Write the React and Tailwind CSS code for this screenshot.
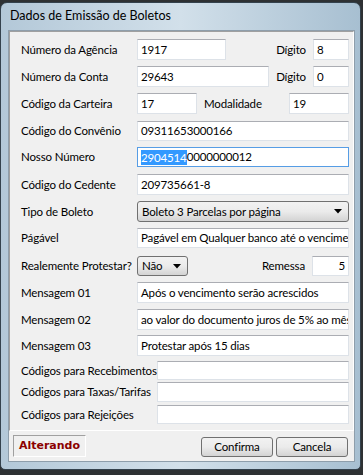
import React from "react";

const FONT = { fontFamily: 'Lato, "Noto Sans", sans-serif' };

const inputClass =
  "h-full bg-white border border-[#dde2e8] border-t-[#abadb3] pl-[3px] pr-[3px] flex items-center text-[11.5px] tracking-[-0.15px] text-black overflow-hidden whitespace-nowrap";

const comboClass =
  "h-full rounded-[3px] border border-[#707070] bg-gradient-to-b from-[#f2f2f2] via-[#ebebeb] to-[#d3d3d3] flex items-center pl-[4px] pr-[6px] text-[11.5px] tracking-[-0.15px] text-black";

function Arrow() {
  return (
    <svg width="8" height="5" viewBox="0 0 8 5" className="ml-auto shrink-0">
      <path d="M0 0 L8 0 L4 4.5 Z" fill="#000" />
    </svg>
  );
}

function Label({ children, w = "w-[116px]" }) {
  return <div className={`${w} shrink-0 text-[11.5px] tracking-[-0.15px] text-black whitespace-nowrap`}>{children}</div>;
}

function Field({ w = "w-[212px]", children, extra = "" }) {
  return <div className={`${inputClass} ${w} ${extra}`}>{children}</div>;
}

const btnClass =
  "mt-[2px] w-[72px] h-[20px] rounded-[3px] border border-[#707070] bg-gradient-to-b from-[#f2f2f2] via-[#ebebeb] to-[#d3d3d3] text-[11.5px] tracking-[-0.15px] text-black";

export default function App() {
  return (
    <div className="w-[363px] h-[475px] bg-[#2e3133] pt-[2px] overflow-hidden" style={FONT}>
      <div className="w-[361px] h-[468px] rounded-t-[7px] rounded-b-[5px] border border-[#34424d] bg-gradient-to-r from-[#b3c8d8] via-[#d2e0ea] to-[#a7bfd1] flex flex-col">
        <div className="h-[27px] pl-[9px] flex items-center text-[12.5px] text-black">
          Dados de Emissão de Boletos
        </div>
        <div className="ml-[7px] w-[347px] flex-1 mb-[7px] border border-[#8e9eab] bg-[#f0f0f0] flex flex-col">
          <div className="h-[400px] border border-t-[#a0a0a0] border-l-[#a0a0a0] border-r-white border-b-white flex flex-col pl-[11px] pr-[4px]">
            <div className="mt-[7px] h-[21px] flex items-center">
              <Label>Número da Agência</Label>
              <Field w="w-[89px]">1917</Field>
              <div className="ml-auto mr-[7px] text-[11.5px] tracking-[-0.15px]">Dígito</div>
              <Field w="w-[36px]">8</Field>
            </div>
            <div className="mt-[6px] h-[21px] flex items-center">
              <Label>Número da Conta</Label>
              <Field w="w-[132px]">29643</Field>
              <div className="ml-auto mr-[7px] text-[11.5px] tracking-[-0.15px]">Dígito</div>
              <Field w="w-[36px]">0</Field>
            </div>
            <div className="mt-[6px] h-[21px] flex items-center">
              <Label>Código da Carteira</Label>
              <Field w="w-[60px]">17</Field>
              <div className="ml-[7px] text-[11.5px] tracking-[-0.15px]">Modalidade</div>
              <Field w="w-[60px]" extra="ml-auto">19</Field>
            </div>
            <div className="mt-[7px] h-[20px] flex items-center">
              <Label>Código do Convênio</Label>
              <Field>09311653000166</Field>
            </div>
            <div className="mt-[6px] h-[20px] flex items-center">
              <Label>Nosso Número</Label>
              <div className="h-full w-[212px] bg-white border border-[#569de5] pl-[3px] flex items-center text-[11.5px] tracking-[-0.15px] text-black whitespace-nowrap overflow-hidden">
                <span className="bg-[#3399ff] text-white leading-[15px]">2904514</span>
                <span>0000000012</span>
              </div>
            </div>
            <div className="mt-[7px] h-[21px] flex items-center">
              <Label>Código do Cedente</Label>
              <Field>209735661-8</Field>
            </div>
            <div className="mt-[6px] h-[21px] flex items-center">
              <Label>Tipo de Boleto</Label>
              <div className={`${comboClass} w-[212px]`}>
                <span>Boleto 3 Parcelas por página</span>
                <Arrow />
              </div>
            </div>
            <div className="mt-[6px] h-[20px] flex items-center">
              <Label>Págável</Label>
              <Field>Pagável em Qualquer banco até o vencimento</Field>
            </div>
            <div className="mt-[8px] h-[20px] flex items-center">
              <Label>Realemente Protestar?</Label>
              <div className={`${comboClass} w-[51px]`}>
                <span>Não</span>
                <Arrow />
              </div>
              <div className="ml-auto mr-[7px] text-[11.5px] tracking-[-0.15px]">Remessa</div>
              <Field w="w-[37px]" extra="justify-end">5</Field>
            </div>
            <div className="mt-[6px] h-[21px] flex items-center">
              <Label>Mensagem 01</Label>
              <Field>Após o vencimento serão acrescidos</Field>
            </div>
            <div className="mt-[6px] h-[21px] flex items-center">
              <Label>Mensagem 02</Label>
              <Field>ao valor do documento juros de 5% ao mês</Field>
            </div>
            <div className="mt-[5px] h-[21px] flex items-center">
              <Label>Mensagem 03</Label>
              <Field>Protestar após 15 dias</Field>
            </div>
            <div className="mt-[5px] h-[19px] flex items-center">
              <Label w="w-[136px]">Códigos para Recebimentos</Label>
              <Field w="w-[195px]"></Field>
            </div>
            <div className="mt-[2px] h-[20px] flex items-center">
              <Label w="w-[136px]">Códigos para Taxas/Tarifas</Label>
              <Field w="w-[195px]"></Field>
            </div>
            <div className="mt-[3px] h-[19px] flex items-center">
              <Label w="w-[136px]">Códigos para Rejeições</Label>
              <Field w="w-[195px]"></Field>
            </div>
          </div>
          <div className="flex items-start pl-[4px] pt-[4px] pr-[6px]">
            <div className="w-[73px] h-[22px] border border-t-[#a0a0a0] border-l-[#a0a0a0] border-r-white border-b-white flex items-center justify-center font-bold text-[#8b0000]" style={{ fontFamily: '"DejaVu Sans", "Liberation Sans", sans-serif', fontSize: "11px" }}>
              Alterando
            </div>
            <button className={`ml-auto ${btnClass}`}>Confirma</button>
            <button className={`ml-[3px] ${btnClass}`}>Cancela</button>
          </div>
        </div>
      </div>
    </div>
  );
}
